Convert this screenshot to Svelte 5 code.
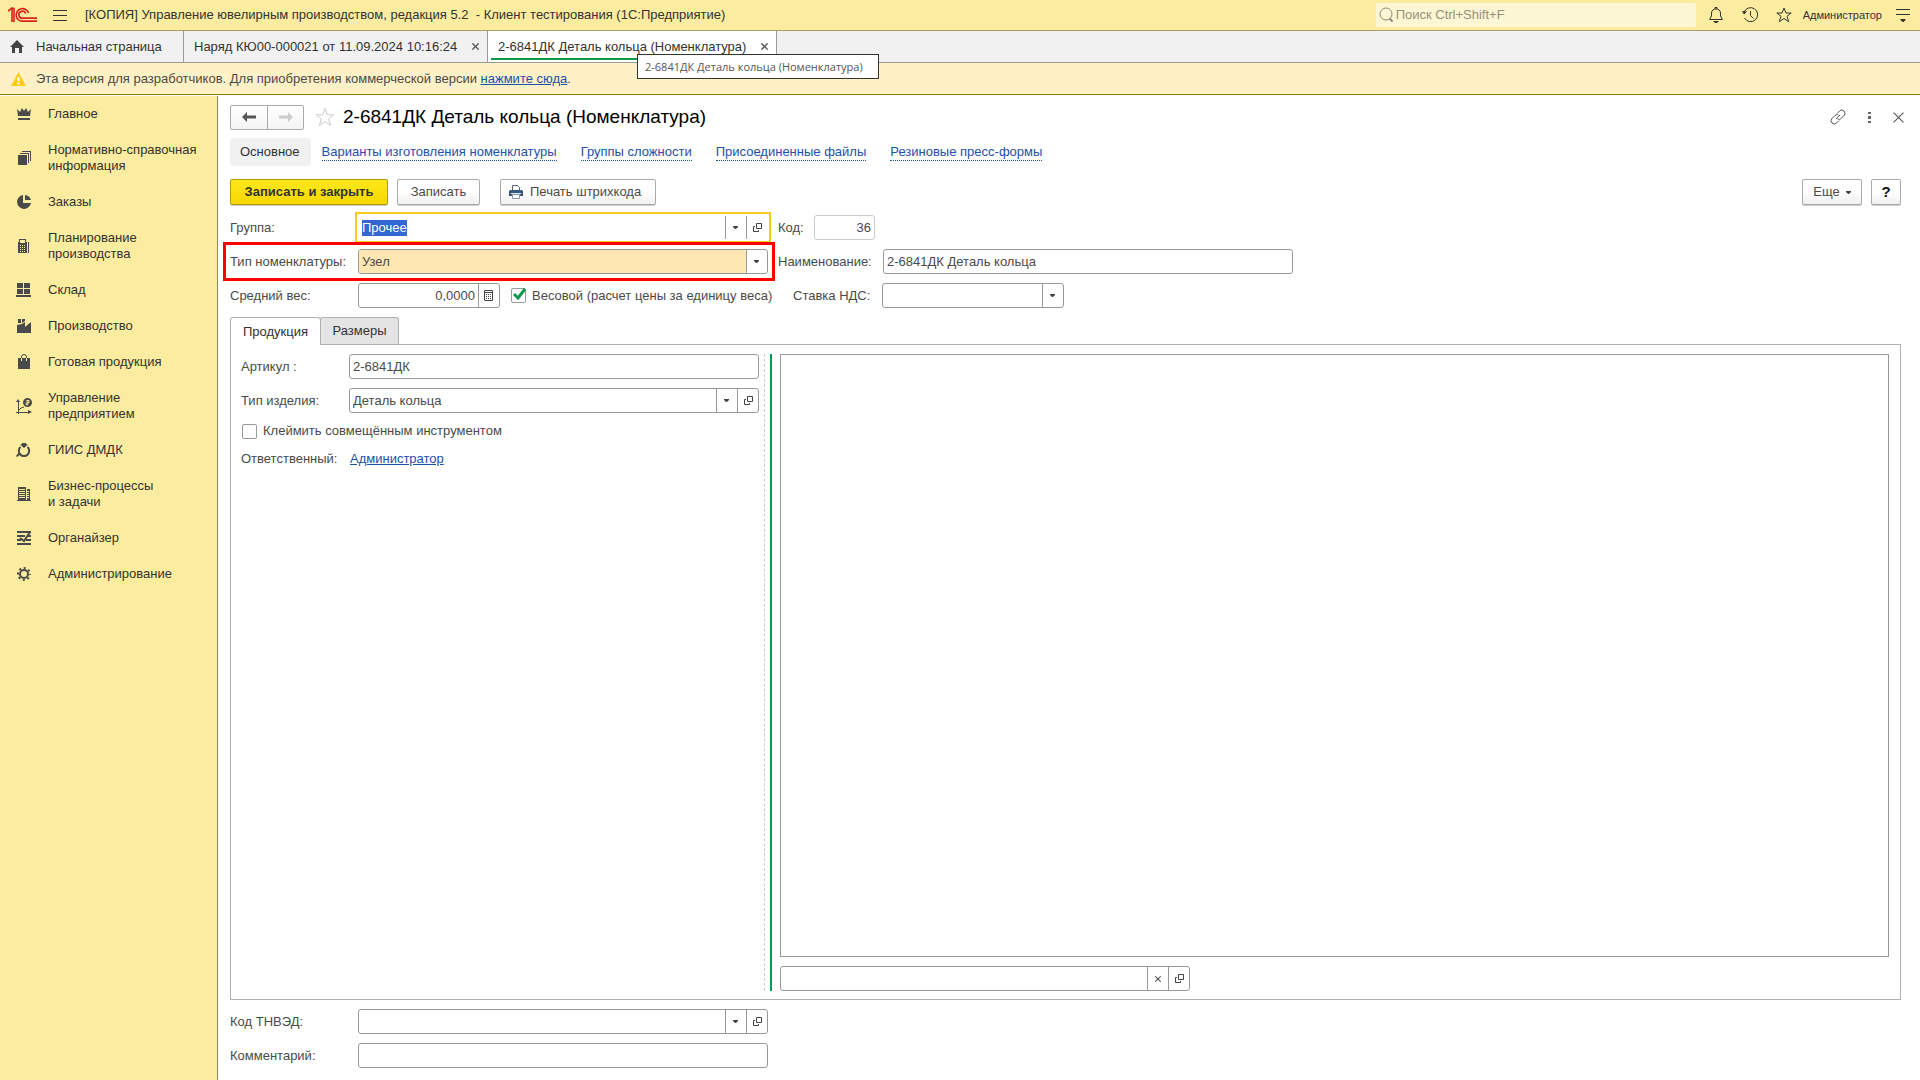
<script>
  import { onMount } from 'svelte';

  const sections = [
    { title: 'Главное', fill: 'M1 3l3 3 2-4 2 3 2-3 2 4 3-3-1 7H2zM2 12h12v2H2z' },
    { title: 'Нормативно-справочная\nинформация', fill: 'M2 5h9v10H2zM4 3h9v10h-1V4H4zM6 1h9v10h-1V2H6z' },
    { title: 'Заказы', fill: 'M7 1v8h8a7 7 0 1 1-8-8zM9 1a7 7 0 0 1 6 5H9z' },
    {
      title: 'Планирование\nпроизводства',
      fill: 'M3 1h7v3h1v11H2V4h1zM4 2v3h5V2zM4 7v1h1V7zM6 7v1h1V7zM8 7v1h1V7zM4 9v1h1V9zM6 9v1h1V9zM8 9v1h1V9zM4 11v1h1v-1zM6 11v1h1v-1zM8 11v1h1v-1zM4 13v1h1v-1zM6 13v1h1v-1zM8 13v1h1v-1zM12 4h1v11h-1z'
    },
    { title: 'Склад', fill: 'M1 1h6v5H1zM8 1h6v5H8zM1 7h6v5H1zM8 7h6v5H8zM0 13h15v2H0z' },
    { title: 'Производство', fill: 'M2 1h3v4H2zM6 1h3v2l-3 2zM1 7l5-1 3-2v5l6-5v11H1z' },
    { title: 'Готовая продукция', fill: 'M2 4h12v11H2z', line: 'M5.500 4V3a2.500 2.500 0 0 1 5 0v1', light: 'M5.500 4v3M10.500 4v3' },
    {
      title: 'Управление\nпредприятием',
      fill: 'M0 4l2-3 2 3zM12 12l4 2-4 2zM11.500 0a4.500 4.500 0 1 1 0 9 4.500 4.500 0 0 1 0-9z',
      line: 'M2.500 3v13M0 14.500h13M2 13l3-3 3-1',
      light: 'M11 2v5.500M11 2.500h2v2h-2M9.500 6h3'
    },
    { title: 'ГИИС ДМДК', fill: 'M4.500 3l2-2h3l2 2-3.500 3zM0 14l3-4 2 2-4 3z', line: 'M4.500 5a5.200 5.200 0 1 0 7 0', wide: true },
    {
      title: 'Бизнес-процессы\nи задачи',
      fill: 'M2 1h8v13H2zM11 3h3v11h-3zM1 14h14v1H1z',
      light: 'M3 3.500h6M3 5.500h6M3 7.500h6M3 9.500h6M3 11.500h6M11 5.500h2M11 7.500h2M11 9.500h2M11 11.500h2'
    },
    { title: 'Органайзер', fill: 'M1 1h14v2H1zM1 5h8v2H1zM11 5h4v2h-4zM1 9h4v2H1zM10 9h5v2h-5zM1 13h14v2H1z', line: 'M4 8l4 3 6-9', wide: true },
    { title: 'Администрирование', gear: true }
  ];

  const links = ['Варианты изготовления номенклатуры', 'Группы сложности', 'Присоединенные файлы', 'Резиновые пресс-формы'];

  let group = $state('Прочее');
  let weighted = $state(true);
  let stamped = $state(false);
  let groupInput;

  onMount(() => {
    groupInput.focus();
    groupInput.select();
  });
</script>

{#snippet arrow()}
  <svg width="5" height="3" viewBox="0 0 5 3" aria-hidden="true"><path d="M0 0h5v1L3 3H2L0 1z" fill="#444" /></svg>
{/snippet}

{#snippet openIcon()}
  <svg width="9" height="9" viewBox="0 0 9 9" fill="none" stroke="#444" aria-hidden="true"><path d="M3.500.500h5v5h-5zM2 3.500H.500v5h5V7" /></svg>
{/snippet}

{#snippet cross(size, color)}
  <svg width={size} height={size} viewBox="0 0 10 10" fill="none" stroke={color} stroke-width={size > 10 ? 1 : 1.8} aria-hidden="true"><path d="M.500.500l9 9M9.500.500l-9 9" /></svg>
{/snippet}

<div class="app">
  <header class="titlebar">
    <svg class="logo" width="30" height="16" viewBox="0 0 30 16" fill="none" stroke="#d9231d" aria-label="1C">
      <path d="M0 4l4-3v14M3 1.500h3V15" stroke-width="1.600" />
      <path d="M20.500 6A6.300 6.300 0 1 0 15 14.200H29" stroke-width="1.700" />
      <path d="M17.700 6.500A3.500 3.500 0 1 0 15 11.200H29" stroke-width="1.700" />
    </svg>
    <button class="icon" aria-label="Меню">
      <svg width="14" height="11" viewBox="0 0 14 11" stroke="#333"><path d="M0 .500h14M0 5.500h14M0 10.500h14" /></svg>
    </button>
    <h1>[КОПИЯ] Управление ювелирным производством, редакция 5.2 &nbsp;- Клиент тестирования (1С:Предприятие)</h1>
    <label class="search">
      <svg width="15" height="16" viewBox="0 0 15 16" fill="none" stroke="#8d8a76"><circle cx="7" cy="7" r="6" /><path d="M10.500 11.500l3 3" stroke-width="2" /></svg>
      <input type="search" placeholder="Поиск Ctrl+Shift+F" aria-label="Поиск" />
    </label>
    <div class="tools">
      <button class="icon" aria-label="Уведомления">
        <svg width="16" height="16" viewBox="0 0 16 16" fill="none" stroke="#333"><path d="M7 2V.500h2V2M1.500 12.500h13l-2-3.500V6c0-2.500-2-4-4.500-4S3.500 3.500 3.500 6v3z" /><path d="M5 14h6l-2 2H7z" fill="#333" stroke="none" /></svg>
      </button>
      <button class="icon" aria-label="История">
        <svg width="16" height="16" viewBox="0 0 16 16" fill="none" stroke="#333"><path d="M2 5.500a7 7 0 1 1 .500 5.500M8.500 4v4.500l3 3" /><path d="M0 4l5 .500-3 3z" fill="#333" stroke="none" /></svg>
      </button>
      <button class="icon" aria-label="Избранное">
        <svg width="16" height="16" viewBox="0 0 16 16" fill="none" stroke="#333"><path d="M8 1l2 5h5.200l-4.200 3.300 1.700 5.400L8 11.500l-4.700 3.200L5 9.300.800 6H6z" /></svg>
      </button>
      <a class="user" href="#user">Администратор</a>
      <button class="icon" aria-label="Сервис">
        <svg width="14" height="13" viewBox="0 0 14 13" stroke="#333"><path d="M0 .500h14M0 5.500h14" /><path d="M4.500 10h5v1L7.500 13h-1l-2-2z" fill="#333" stroke="none" /></svg>
      </button>
    </div>
  </header>

  <nav class="tabs" aria-label="Открытые окна">
    <a class="tab home" href="#home">
      <svg width="14" height="13" viewBox="0 0 14 13" fill="#444"><path d="M7 0l7 7h-2v6H9V8H5v5H2V7H0z" /></svg>
      Начальная страница
    </a>
    <div class="tab"><a href="#order">Наряд КЮ00-000021 от 11.09.2024 10:16:24</a><button class="icon" aria-label="Закрыть">{@render cross(7, '#555')}</button></div>
    <div class="tab active">
      <a href="#item">2-6841ДК Деталь кольца (Номенклатура)</a><button class="icon" aria-label="Закрыть">{@render cross(7, '#555')}</button>
      <div class="tooltip" role="tooltip">2-6841ДК Деталь кольца (Номенклатура)</div>
    </div>
  </nav>

  <div class="notice">
    <svg width="15" height="14" viewBox="0 0 15 14"><path d="M7.500 0L15 14H0z" fill="#fbcb1c" /><path d="M6.500 5h2v4h-2zM6.500 10.500h2v2h-2z" fill="#fff" /></svg>
    <p>Эта версия для разработчиков. Для приобретения коммерческой версии <a href="#buy">нажмите сюда</a>.</p>
  </div>

  <div class="body">
    <nav class="sidebar" aria-label="Разделы">
      {#each sections as s}
        <a href="#section">
          <svg width="16" height="16" viewBox="0 0 16 16">
            {#if s.gear}
              <circle cx="8" cy="8" r="4" fill="none" stroke="#4a4a4a" stroke-width="2" />
              <circle cx="8" cy="8" r="6" fill="none" stroke="#4a4a4a" stroke-width="2" stroke-dasharray="2 2.712" stroke-dashoffset="1" />
            {:else}
              <path d={s.fill} fill="#4a4a4a" fill-rule="evenodd" />
              {#if s.line}<path d={s.line} fill="none" stroke="#4a4a4a" stroke-width={s.wide ? 2 : 1} />{/if}
              {#if s.light}<path d={s.light} fill="none" stroke="#fbec9f" />{/if}
            {/if}
          </svg>
          <span>{s.title}</span>
        </a>
      {/each}
    </nav>

    <main>
      <div class="heading">
        <div class="history">
          <button aria-label="Назад"><svg width="14" height="10" viewBox="0 0 14 10"><path d="M0 5l5-5v3.500h9v3H5V10z" fill="#555" /></svg></button>
          <button aria-label="Вперед"><svg width="14" height="10" viewBox="0 0 14 10"><path d="M14 5L9 0v3.500H0v3h9V10z" fill="#ccc" /></svg></button>
        </div>
        <button class="icon fav" aria-label="В избранное">
          <svg width="20" height="20" viewBox="0 0 20 20" fill="none" stroke="#ccc"><path d="M10 1.500l2.300 6.300h6.400l-5.100 4.100 2 6.600L10 14.600l-5.600 3.900 2-6.600L1.300 7.800h6.400z" /></svg>
        </button>
        <h2>2-6841ДК Деталь кольца (Номенклатура)</h2>
        <div class="window">
          <button class="icon" aria-label="Ссылка">
            <svg width="16" height="16" viewBox="0 0 16 16" fill="none" stroke="#555"><path d="M7 4.500l2.500-2.500a3 3 0 0 1 4.500 4.500L11 9.500c-1 1-2.500 1-3.500.500M9 11.500l-2.500 2.500A3 3 0 0 1 2 9.500L5 6.500c1-1 2.500-1 3.500-.500M6 10l4-4" /></svg>
          </button>
          <button class="icon" aria-label="Еще действия">
            <svg width="3" height="11" viewBox="0 0 3 11" fill="#666"><path d="M0 0h3v2H0zM0 4h3v3H0zM0 9h3v2H0z" /></svg>
          </button>
          <button class="icon" aria-label="Закрыть">{@render cross(11, '#555')}</button>
        </div>
      </div>

      <nav class="links" aria-label="Связанные данные">
        <span class="current">Основное</span>
        {#each links as l}<a href="#link">{l}</a>{/each}
      </nav>

      <div class="commands">
        <button class="btn primary">Записать и закрыть</button>
        <button class="btn save">Записать</button>
        <button class="btn print">
          <svg width="14" height="14" viewBox="0 0 14 14"><path d="M3.500 6V.500h5l2 2V6" fill="#fff" stroke="#555f6a" /><path d="M1 5h12l1 1v5H0V6z" fill="#36597f" /><path d="M2 8h10v1H2z" fill="#dfe6ee" /><path d="M3.500 9.500h7v4h-7z" fill="#fff" stroke="#8a97a5" /></svg>
          Печать штрихкода
        </button>
        <button class="btn more">Еще {@render arrow()}</button>
        <button class="btn help" aria-label="Справка">?</button>
      </div>

      <form class="form" onsubmit={(e) => e.preventDefault()}>
        <div class="row">
          <div class="item">
            <label for="group">Группа:</label>
            <div class="field wide focused">
              <input id="group" bind:value={group} bind:this={groupInput} />
              <button type="button" aria-label="Выбрать">{@render arrow()}</button>
              <button type="button" class="open" aria-label="Открыть">{@render openIcon()}</button>
            </div>
          </div>
          <label for="code" class="code">Код:</label>
          <div class="field small quiet"><input id="code" class="num" value="36" readonly /></div>
        </div>

        <div class="row">
          <div class="item marked">
            <label for="type">Тип номенклатуры:</label>
            <div class="field wide">
              <select id="type" class="tinted"><option>Узел</option></select>
              <button type="button" aria-label="Раскрыть">{@render arrow()}</button>
            </div>
          </div>
          <label for="name" class="name">Наименование:</label>
          <div class="field wide"><input id="name" value="2-6841ДК Деталь кольца" /></div>
        </div>

        <div class="row">
          <div class="item">
            <label for="weight">Средний вес:</label>
            <div class="field weight">
              <input id="weight" class="num" value="0,0000" />
              <button type="button" aria-label="Калькулятор">
                <svg width="9" height="11" viewBox="0 0 9 11"><path d="M.500.500h8v10h-8z" fill="none" stroke="#444" /><path d="M1 2h7v1H1zM2 4h1v1H2zM4 4h1v1H4zM6 4h1v1H6zM2 6h1v1H2zM4 6h1v1H4zM6 6h1v1H6zM2 8h1v1H2zM4 8h1v1H4zM6 8h1v1H6z" fill="#444" /></svg>
              </button>
            </div>
          </div>
          <label class="check priced">
            <input type="checkbox" bind:checked={weighted} />
            {#if weighted}<svg class="tick" width="14" height="13" viewBox="0 0 14 13" fill="none" stroke="#0a9a4c" stroke-width="3"><path d="M1 6l4 4 7-9" /></svg>{/if}
            Весовой (расчет цены за единицу веса)
          </label>
          <label for="vat" class="vat">Ставка НДС:</label>
          <div class="field vatfield">
            <select id="vat"><option></option></select>
            <button type="button" aria-label="Раскрыть">{@render arrow()}</button>
          </div>
        </div>

        <div class="pagetabs" role="tablist">
          <button type="button" role="tab" aria-selected="true" class="selected">Продукция</button>
          <button type="button" role="tab" aria-selected="false">Размеры</button>
        </div>

        <div class="panel" role="tabpanel">
          <div class="details">
            <div class="row">
              <label for="article">Артикул :</label>
              <div class="field wide"><input id="article" value="2-6841ДК" /></div>
            </div>
            <div class="row">
              <label for="kind">Тип изделия:</label>
              <div class="field wide">
                <input id="kind" value="Деталь кольца" />
                <button type="button" aria-label="Выбрать">{@render arrow()}</button>
                <button type="button" class="open" aria-label="Открыть">{@render openIcon()}</button>
              </div>
            </div>
            <label class="check"><input type="checkbox" bind:checked={stamped} /> Клеймить совмещённым инструментом</label>
            <div class="owner"><span>Ответственный:</span><a href="#owner">Администратор</a></div>
          </div>
          <div class="splitter"></div>
          <div class="preview">
            <div class="picture"></div>
            <div class="field wide">
              <input aria-label="Изображение" />
              <button type="button" aria-label="Очистить">{@render cross(6, '#555')}</button>
              <button type="button" class="open" aria-label="Открыть">{@render openIcon()}</button>
            </div>
          </div>
        </div>

        <div class="row">
          <div class="item">
            <label for="tnved">Код ТНВЭД:</label>
            <div class="field wide">
              <input id="tnved" />
              <button type="button" aria-label="Выбрать">{@render arrow()}</button>
              <button type="button" class="open" aria-label="Открыть">{@render openIcon()}</button>
            </div>
          </div>
        </div>
        <div class="row">
          <div class="item">
            <label for="comment">Комментарий:</label>
            <div class="field wide"><input id="comment" /></div>
          </div>
        </div>
      </form>
    </main>
  </div>
</div>

<style>
  :global(body) { margin: 0; }
  * { box-sizing: border-box; }
  .app {
    display: flex;
    flex-direction: column;
    min-height: 100vh;
    background: #fff;
    color: #4a4a4a;
    font: 13px/16px "Liberation Sans", Arial, sans-serif;
  }
  svg { display: block; flex: none; }
  h1, h2, p { margin: 0; font-weight: normal; }
  button, input, select { font: inherit; color: inherit; }
  a { color: inherit; text-decoration: none; }
  .icon { display: flex; padding: 0; border: 0; background: none; }

  .titlebar {
    display: flex;
    align-items: center;
    height: 31px;
    padding: 0 10px 0 8px;
    background: #fbec9f;
    border-bottom: 1px solid #a9a069;
    color: #333;
  }
  .titlebar > .icon { margin: 0 18px 0 15px; }
  h1 { font-size: 13px; }
  .search {
    display: flex;
    align-items: center;
    gap: 2px;
    width: 320px;
    height: 24px;
    margin-left: auto;
    padding-left: 3px;
    background: #fdf6d4;
    border-radius: 2px;
  }
  .search input { flex: 1; min-width: 0; padding: 0; border: 0; background: none; outline: 0; }
  .search input::placeholder { color: #96917a; opacity: 1; }
  .tools { display: flex; align-items: center; gap: 18px; margin-left: 12px; }
  .user { margin: 0 -4px 0 -7px; font-size: 11px; }

  .tabs { display: flex; height: 32px; background: #f1f1f1; border-bottom: 1px solid #999; color: #333; }
  .tab { display: flex; align-items: center; justify-content: space-between; width: 304px; padding: 0 8px 0 10px; border-right: 1px solid #999; }
  .tab.home { justify-content: flex-start; gap: 12px; width: 184px; }
  .tab.active { position: relative; width: 289px; background: #fff; }
  .tab.active::after { content: ""; position: absolute; left: 3px; right: 3px; bottom: 2px; height: 2px; background: #0a9a4c; }
  .tooltip {
    position: absolute;
    z-index: 2;
    left: 149px;
    top: 23px;
    width: 242px;
    height: 25px;
    padding: 4px 7px;
    border: 1px solid #333;
    background: #fff;
    color: #555;
    font: 11px/15px "Open Sans", sans-serif;
    white-space: nowrap;
  }

  .notice { display: flex; align-items: center; gap: 10px; height: 32px; padding-left: 11px; background: #fef1c5; border-bottom: 1px solid #98790f; }
  .notice a, .owner a { color: #1d50a8; text-decoration: underline; }

  .body { display: flex; flex: 1; padding-top: 1px; }
  .sidebar { width: 218px; flex: none; background: #fbec9f; border-right: 1px solid #8f8a5f; color: #333; }
  .sidebar a { display: flex; align-items: center; gap: 16px; padding: 10px 16px; }
  .sidebar span { white-space: pre-line; }

  main { display: flex; flex-direction: column; flex: 1; min-width: 0; padding: 9px 19px 12px 12px; }
  .heading { display: flex; align-items: center; height: 24px; }
  .history { display: flex; }
  .history button {
    display: flex;
    align-items: center;
    justify-content: center;
    width: 38px;
    height: 25px;
    padding: 0;
    border: 1px solid #aaa;
    border-radius: 2px 0 0 2px;
    background: linear-gradient(#fff, #f4f4f4);
  }
  .history button + button { width: 37px; margin-left: -1px; border-radius: 0 2px 2px 0; }
  .fav { margin: 0 8px 0 11px; }
  h2 { color: #000; font-size: 19px; line-height: 24px; }
  .window { display: flex; align-items: center; gap: 22px; margin: 0 -3px 0 auto; }

  .links { display: flex; align-items: center; gap: 24px; margin-top: 9px; }
  .current { padding: 6px 11px 6px 10px; margin-right: -13px; background: #f1f1f1; border-radius: 3px; color: #333; }
  .links a { border-bottom: 1px dotted #1d50a8; color: #1d50a8; }

  .commands { display: flex; margin-top: 13px; }
  .btn {
    display: flex;
    align-items: center;
    justify-content: center;
    height: 26px;
    padding: 0;
    border: 1px solid #aaa;
    border-radius: 2px;
    background: linear-gradient(#fff 50%, #f0f0f0);
    box-shadow: 0 1px #ccc;
  }
  .primary { width: 158px; border-color: #b39b00; background: linear-gradient(#ffe81a, #f7d800); color: #333; font-weight: bold; }
  .save { width: 83px; margin: 0 20px 0 9px; }
  .print { justify-content: flex-start; gap: 7px; width: 156px; padding-left: 8px; }
  .more { gap: 6px; width: 60px; margin: 0 9px 0 auto; }
  .help { width: 30px; color: #111; font-size: 15px; font-weight: bold; }

  .form { display: flex; flex-direction: column; flex: 1; margin-top: 10px; }
  .row { display: flex; align-items: center; margin-bottom: 9px; }
  .item { position: relative; display: flex; align-items: center; margin-right: 10px; }
  .item > label { width: 128px; }
  .marked::after { content: ""; position: absolute; inset: -7px; border: 3px solid #f00; pointer-events: none; }
  .field { display: flex; height: 25px; border: 1px solid #999; border-radius: 3px; background: #fff; }
  .wide { width: 410px; }
  .small { width: 61px; }
  .weight { width: 142px; }
  .vatfield { width: 182px; }
  .quiet { border-color: #ccc; }
  .focused { border-color: transparent; border-radius: 0; outline: 2px solid #fbc91e; outline-offset: 1px; }
  .field input, .field select { flex: 1; min-width: 0; padding: 0 3px; border: 0; border-radius: 2px; background: none; outline: 0; appearance: none; }
  .field .tinted { background: #ffe6b3; }
  .field input::selection { background: #3367d1; color: #fff; }
  .field .num { text-align: right; }
  .field button { display: flex; align-items: center; justify-content: center; width: 21px; padding: 0 1px 0 0; border: 0; border-left: 1px solid #999; background: none; }
  .field .open { padding: 0 0 0 1px; }
  .code { width: 36px; }
  .name { width: 105px; }
  .vat { width: 89px; }
  .check { position: relative; display: flex; align-items: center; gap: 6px; }
  .check input { width: 15px; height: 15px; margin: 0; border: 1px solid #999; border-radius: 2px; background: #fff; appearance: none; }
  .tick { position: absolute; left: 2px; top: 0; }
  .priced { width: 282px; margin-left: 1px; }

  .pagetabs { display: flex; }
  .pagetabs button { width: 79px; height: 27px; margin-left: -1px; padding: 0 11px; border: 1px solid #b0b0b0; border-bottom: 0; border-radius: 3px 3px 0 0; background: #e4e4e4; color: #333; }
  .pagetabs .selected { z-index: 1; width: 91px; height: 28px; margin: 0 0 -1px; background: #fff; }
  .panel { display: flex; flex: 1; margin-bottom: 9px; padding: 9px 11px 8px 10px; border: 1px solid #b0b0b0; }
  .details { width: 524px; border-right: 1px dashed #ccc; }
  .details .row label { width: 108px; }
  .details .check { margin: 10px 0 0 1px; }
  .owner { margin-top: 12px; }
  .owner span { display: inline-block; width: 109px; }
  .splitter { width: 2px; margin: 0 8px 0 5px; background: #0a9a4c; }
  .preview { display: flex; flex-direction: column; flex: 1; gap: 9px; min-width: 0; }
  .picture { flex: 1; border: 1px solid #999; }
  .form > .row:last-child { margin-bottom: 0; }
</style>
